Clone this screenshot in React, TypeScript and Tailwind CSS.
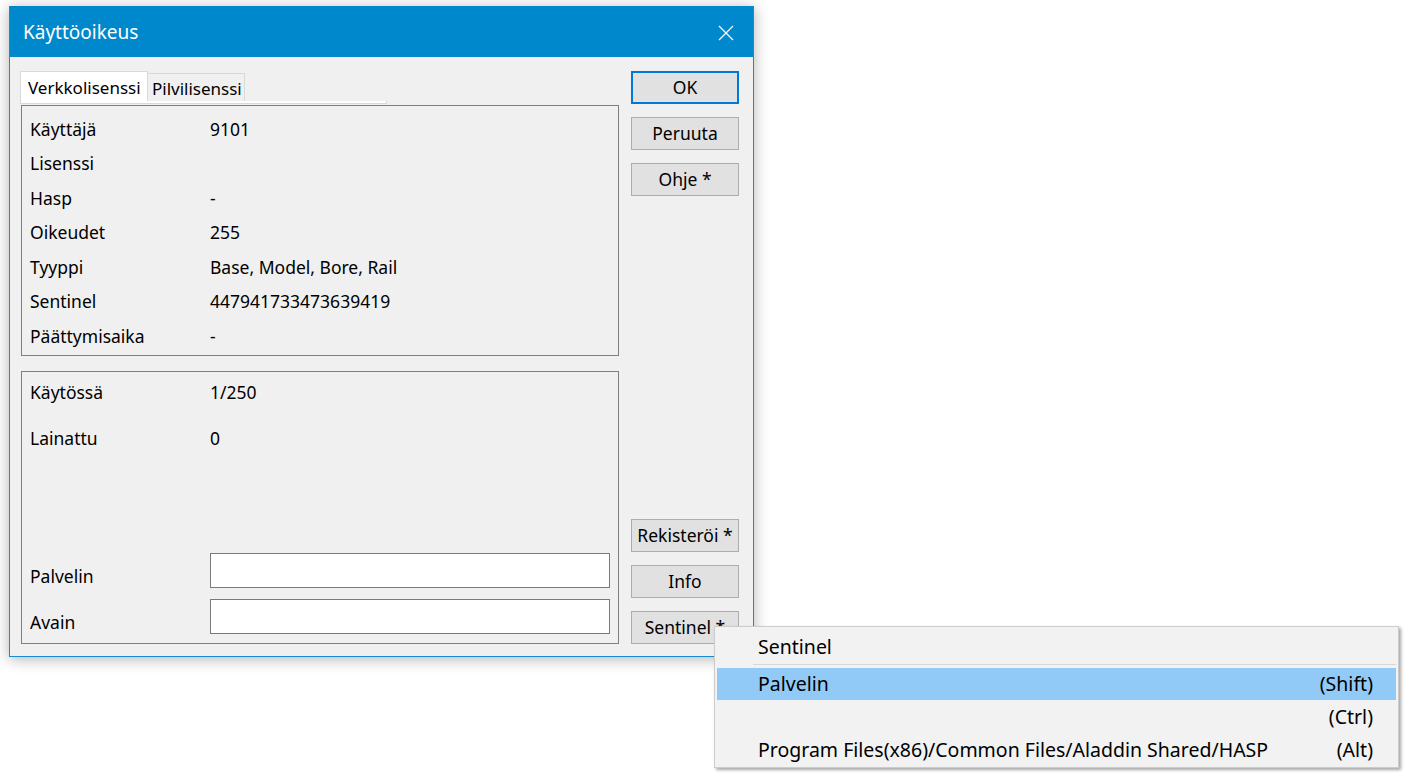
import React from 'react';

const rows1: [string, string][] = [
  ['Käyttäjä', '9101'],
  ['Lisenssi', ''],
  ['Hasp', '-'],
  ['Oikeudet', '255'],
  ['Tyyppi', 'Base, Model, Bore, Rail'],
  ['Sentinel', '447941733473639419'],
  ['Päättymisaika', '-'],
];

function Btn({ label, primary }: { label: string; primary?: boolean }) {
  return (
    <button
      className={`h-[33px] w-[108px] bg-[#e1e1e1] flex items-center justify-center text-black text-[17.5px] ${
        primary ? 'border-2 border-[#0078d7]' : 'border border-[#adadad]'
      }`}
    >
      {label}
    </button>
  );
}

export default function App() {
  return (
    <div className="relative min-h-screen w-full bg-white font-['Noto_Sans',sans-serif] text-[17.5px] leading-none text-black">
      <div className="pl-[9px] pt-[6px]">
        <div className="flex h-[651px] w-[745px] flex-col border border-t-0 border-[#1a8ad4] bg-[#f0f0f0] shadow-[0_2px_14px_rgba(0,0,0,0.3)]">
          {/* title bar */}
          <div className="flex h-[51px] items-center justify-between bg-[#0088cc] pl-[13px] pr-[19px] pt-[2px] text-white">
            <span className="text-[19px]">Käyttöoikeus</span>
            <svg width="16" height="16" viewBox="0 0 16 16">
              <path d="M1 1 L15 15 M15 1 L1 15" stroke="white" strokeWidth="1.2" />
            </svg>
          </div>

          <div className="flex flex-1 pl-[10px] pt-[14px]">
            {/* left column */}
            <div className="flex w-[599px] flex-col">
              <div className="flex h-[30px] items-end text-[17px]">
                <div className="flex h-[30px] w-[128px] items-center border border-b-0 border-[#d9d9d9] bg-white pl-[7px] pt-[1px]">
                  Verkkolisenssi
                </div>
                <div className="flex h-[28px] w-[97px] items-center border border-b-0 border-l-0 border-[#d9d9d9] bg-[#f0f0f0] pl-[4px] pt-[2px]">
                  Pilvilisenssi
                </div>
              </div>
              <div className="h-[3px] w-[367px] border-x border-b border-[#d9d9d9] bg-white" />

              <div className="ml-[1px] mt-[1px] h-[251px] w-[598px] border border-[#7f7f7f] pl-[8px] pt-[6px]">
                {rows1.map(([k, v]) => (
                  <div key={k} className="flex h-[34.5px] items-center">
                    <span className="w-[180px]">{k}</span>
                    <span>{v}</span>
                  </div>
                ))}
              </div>

              <div className="ml-[1px] mt-[15px] flex h-[273px] w-[598px] flex-col justify-between border border-[#7f7f7f] pb-[9px] pl-[8px] pt-[4px]">
                <div>
                  <div className="flex h-[34px] items-center">
                    <span className="w-[180px]">Käytössä</span>
                    <span>1/250</span>
                  </div>
                  <div className="mt-[12px] flex h-[34px] items-center">
                    <span className="w-[180px]">Lainattu</span>
                    <span>0</span>
                  </div>
                </div>
                <div className="flex flex-col gap-[11px]">
                  <div className="flex h-[35px] items-end">
                    <span className="w-[180px] pb-[3px]">Palvelin</span>
                    <div className="h-[35px] w-[400px] border border-[#7a7a7a] bg-white" />
                  </div>
                  <div className="flex h-[35px] items-end">
                    <span className="w-[180px] pb-[3px]">Avain</span>
                    <div className="h-[35px] w-[400px] border border-[#7a7a7a] bg-white" />
                  </div>
                </div>
              </div>
            </div>

            {/* right column */}
            <div className="ml-[12px] flex h-[573px] flex-col justify-between">
              <div className="flex flex-col gap-[13px]">
                <Btn label="OK" primary />
                <Btn label="Peruuta" />
                <Btn label="Ohje *" />
              </div>
              <div className="flex flex-col gap-[13px]">
                <Btn label="Rekisteröi *" />
                <Btn label="Info" />
                <Btn label="Sentinel *" />
              </div>
            </div>
          </div>
        </div>
      </div>

      {/* context menu */}
      <div className="absolute left-[714px] top-[626px] flex h-[142px] w-[685px] flex-col border border-[#cccccc] bg-[#f2f2f2] text-[19.5px] shadow-[2px_2px_3px_rgba(0,0,0,0.35)]">
        <div className="flex h-[37px] items-center pl-[43px] pt-[2px]">Sentinel</div>
        <div className="ml-[38px] mr-[2px] h-px bg-[#d7d7d7]" />
        <div className="mx-[2px] mt-[3px] flex h-[32px] items-center justify-between bg-[#91c9f7] pl-[41px] pr-[23px]">
          <span>Palvelin</span>
          <span>(Shift)</span>
        </div>
        <div className="mx-[2px] flex h-[33px] items-center justify-between pl-[41px] pr-[23px]">
          <span></span>
          <span>(Ctrl)</span>
        </div>
        <div className="mx-[2px] flex h-[33px] items-center justify-between pl-[41px] pr-[23px]">
          <span>Program Files(x86)/Common Files/Aladdin Shared/HASP</span>
          <span>(Alt)</span>
        </div>
      </div>
    </div>
  );
}
